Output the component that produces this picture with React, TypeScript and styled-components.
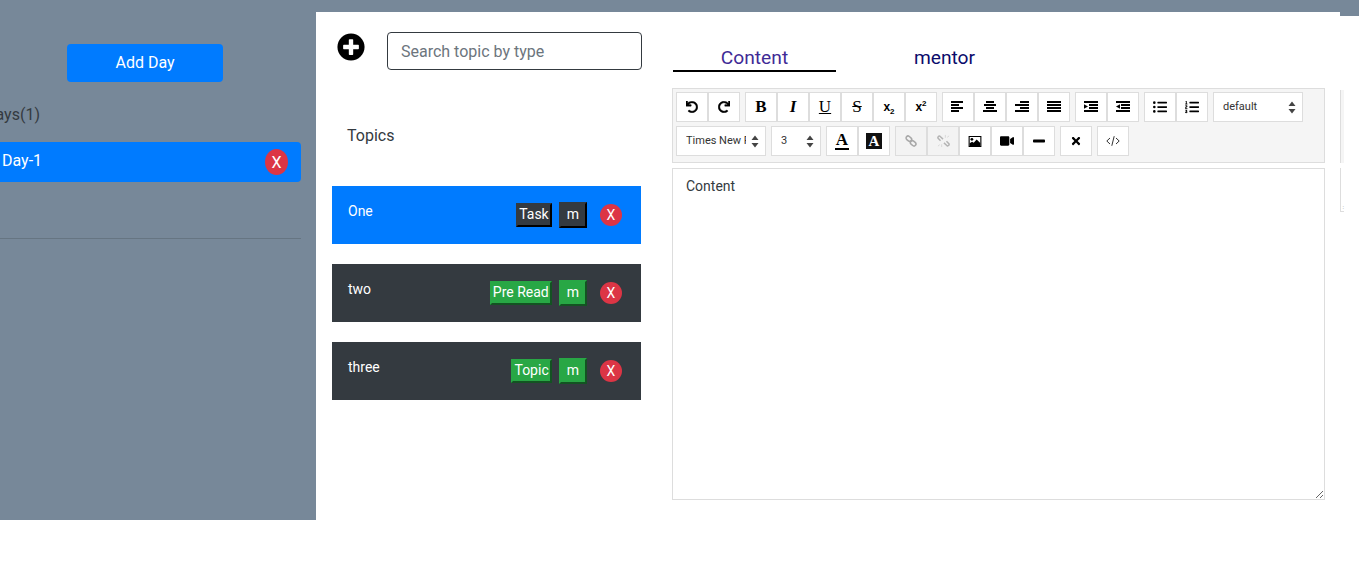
import React from 'react'
import styled, { createGlobalStyle } from 'styled-components'
import {
  FaListOl,
  FaListUl,
  FaPlusCircle,
  FaRedo,
  FaTimes,
  FaUndo,
  FaVideo,
} from 'react-icons/fa'

const arrows =
  "url(\"data:image/svg+xml,%3Csvg xmlns='http://www.w3.org/2000/svg' width='8' height='13'%3E%3Cpath d='M4 0.5 7.5 5H.5zM4 12.5 7.5 8H.5z' fill='%23444'/%3E%3C/svg%3E\")"

const GlobalStyle = createGlobalStyle`
  html, body {
    margin: 0;
    background: #fff;
    font-family: Roboto, "Liberation Sans", sans-serif;
    color: #212529;
  }
  * {
    box-sizing: border-box;
  }
`

const Shell = styled.div`
  display: flex;
  width: 1359px;
  height: 520px;
  background: #778899;
  overflow: hidden;
`

const Sidebar = styled.aside`
  flex: 0 0 316px;
  padding-top: 44px;
  overflow: hidden;
`

const AddDayButton = styled.button`
  display: block;
  width: 156px;
  height: 38px;
  margin-left: 67px;
  padding: 0 0 2px;
  border: 0;
  border-radius: 4px;
  background: #007bff;
  color: #fff;
  font: 16px Roboto, sans-serif;
`

const DaysLabel = styled.div`
  margin: 21px 0 0 -15px;
  font-size: 16px;
  line-height: 24px;
  color: #343a40;
`

const DayRow = styled.div`
  display: flex;
  align-items: center;
  justify-content: space-between;
  width: 301px;
  height: 40px;
  margin-top: 15px;
  padding: 0 13px 0 2px;
  border-radius: 0 4px 4px 0;
  background: #007bff;
  color: #fff;
  font-size: 16px;
`

const DayName = styled.span`
  margin-bottom: 3px;
`

const DayRemove = styled.span`
  display: flex;
  align-items: center;
  justify-content: center;
  width: 23px;
  height: 26px;
  border-radius: 50%;
  background: #dc3545;
  color: #fff;
  font-size: 16px;
`

const SideRule = styled.hr`
  width: 301px;
  margin: 56px 0 0;
  border: 0;
  border-top: 1px solid rgba(52, 58, 64, 0.25);
`

const Panel = styled.main`
  display: flex;
  flex: 0 0 1024px;
  margin-top: 12px;
  background: #fff;
`

const LeftColumn = styled.section`
  flex: 0 0 325px;
  margin-left: 16px;
  padding-top: 20px;
`

const SearchRow = styled.div`
  display: flex;
  align-items: flex-start;
  width: 310px;
  padding-left: 5px;
`

const AddTopic = styled.span`
  display: flex;
  flex: 0 0 28px;
  margin-top: 1px;
  color: #000;
`

const SearchInput = styled.input`
  flex: 0 0 255px;
  height: 38px;
  margin-left: 22px;
  padding: 0 13px;
  border: 1px solid #343a40;
  border-radius: 4px;
  font: 16px Roboto, sans-serif;
  &::placeholder {
    color: #6c757d;
    opacity: 1;
  }
`

const TopicsTitle = styled.h2`
  margin: 54px 0 38px;
  padding-left: 15px;
  color: #343a40;
  font-size: 16px;
  font-weight: 400;
  line-height: 24px;
`

const TopicList = styled.div`
  display: flex;
  flex-direction: column;
  gap: 20px;
  width: 309px;
`

const TopicCard = styled.div<{ $active?: boolean }>`
  display: flex;
  align-items: center;
  justify-content: space-between;
  height: 58px;
  padding: 0 19px 0 16px;
  background: ${(p) => (p.$active ? '#007bff' : '#343a40')};
  color: #fff;
`

const TopicName = styled.span`
  align-self: flex-start;
  padding-top: 16px;
  font-size: 14px;
  line-height: 18px;
`

const TopicActions = styled.div`
  display: flex;
  align-items: center;
`

const Tag = styled.button<{ $dark?: boolean; $wide?: boolean }>`
  height: ${(p) => (p.$wide ? '26px' : '24px')};
  margin-left: ${(p) => (p.$wide ? '7px' : '0')};
  padding: 0 ${(p) => (p.$wide ? '6px' : '1px')} 2px;
  border: 2px outset ${(p) => (p.$dark ? '#343a40' : '#28a745')};
  background: ${(p) => (p.$dark ? '#343a40' : '#28a745')};
  color: #fff;
  font: 14px/18px Roboto, sans-serif;
`

const TopicRemove = styled.span`
  display: flex;
  align-items: center;
  justify-content: center;
  width: 22px;
  height: 22px;
  margin-left: 13px;
  padding-bottom: 1px;
  border-radius: 50%;
  background: #dc3545;
  font-size: 14px;
`

const RightColumn = styled.section`
  flex: 0 0 653px;
  margin-left: 15px;
  padding-top: 32px;
`

const Tabs = styled.nav`
  display: flex;
  gap: 27px;
  margin: 0 0 16px 1px;
`

const Tab = styled.div<{ $active?: boolean }>`
  width: 163px;
  height: 28px;
  border-bottom: 2px solid ${(p) => (p.$active ? '#000' : 'transparent')};
  color: ${(p) => (p.$active ? '#3f2b96' : '#0b0b6b')};
  font-size: 19.2px;
  line-height: 27px;
  text-align: center;
`

const Toolbar = styled.div`
  display: flex;
  flex-direction: column;
  gap: 4px;
  height: 75px;
  padding: 3px 3px 6px;
  border: 1px solid #ddd;
  background: #f5f5f5;
`

const ToolRow = styled.div`
  display: flex;
  gap: 5px;
`

const ToolGroup = styled.div`
  display: flex;
`

const ToolButton = styled.button<{ $off?: boolean }>`
  display: flex;
  align-items: center;
  justify-content: center;
  width: 32px;
  height: 30px;
  padding: 0;
  border: 1px solid #ddd;
  background: ${(p) => (p.$off ? '#f3f3f3' : '#fff')};
  color: #000;
  font-size: 14px;
`

const ToolSelect = styled.select<{ $width: number }>`
  width: ${(p) => p.$width}px;
  height: 30px;
  padding: 0 19px 2px 9px;
  border: 1px solid #ddd;
  border-radius: 0;
  appearance: none;
  background: #fff ${arrows} no-repeat right 6px center;
  color: #333;
  font: 11px Roboto, sans-serif;
`

const SerifMark = styled.span<{ $italic?: boolean; $under?: boolean; $strike?: boolean }>`
  font: ${(p) => (p.$italic ? 'italic ' : '')}${(p) => (p.$strike || p.$under ? '400' : '700')} 17px "Liberation Serif", serif;
  text-decoration: ${(p) =>
    p.$under ? 'underline' : p.$strike ? 'line-through' : 'none'};
`

const ScriptMark = styled.span`
  font: 700 12px "Liberation Sans", sans-serif;
  sub,
  sup {
    font-size: 8px;
    line-height: 0;
  }
`

const ColorMark = styled.span`
  padding: 0 1px;
  border-bottom: 2px solid #000;
  font: 700 17px/16px "Liberation Serif", serif;
`

const BackColorMark = styled.span`
  width: 16px;
  height: 16px;
  background: #111;
  color: #fff;
  font: 700 15px/17px "Liberation Serif", serif;
  text-align: center;
`

const Editor = styled.textarea`
  display: block;
  width: 653px;
  height: 332px;
  margin-top: 5px;
  padding: 8px 13px;
  border: 1px solid #ddd;
  border-radius: 0;
  outline: none;
  color: #343a40;
  font: 14px/18px Roboto, sans-serif;
`

const Overflow = styled.div`
  flex: 0 0 19px;
  margin-top: 16px;
  padding-top: 74px;
  background: #fff;
`

const OverflowBar = styled.div`
  width: 4px;
  height: 73px;
  border-left: 1px solid #ddd;
  background: #f5f5f5;
`

const OverflowEditor = styled.div`
  display: flex;
  align-items: flex-end;
  justify-content: flex-end;
  width: 4px;
  height: 44px;
  margin-top: 5px;
  border-left: 1px solid #ddd;
  border-bottom: 1px solid #ddd;
  color: #777;
  font-size: 6px;
  line-height: 8px;
`

const Lines = ({ widths, align }: { widths: number[]; align: 'left' | 'center' | 'right' }) => (
  <svg width='14' height='12' viewBox='0 0 14 12'>
    {widths.map((w, i) => (
      <rect
        key={i}
        x={align === 'left' ? 0 : align === 'right' ? 14 - w : (14 - w) / 2}
        y={i * 3}
        width={w}
        height='2'
      />
    ))}
  </svg>
)

const Indent = ({ out }: { out?: boolean }) => (
  <svg width='14' height='12' viewBox='0 0 14 12'>
    <rect width='14' height='2' />
    <rect x='5' y='3' width='9' height='2' />
    <rect x='5' y='6' width='9' height='2' />
    <rect y='9' width='14' height='2' />
    <path d={out ? 'M4 3.2v4.6L0 5.5z' : 'M0 3.2v4.6l4-2.3z'} />
  </svg>
)

const LinkIcon = () => (
  <svg width='12' height='12' viewBox='0 0 14 14' fill='none' stroke='#a8a8a8' strokeWidth='1.8'>
    <rect x='1' y='2' width='7' height='4.6' rx='2.3' transform='rotate(40 4.5 4.3)' />
    <rect x='6' y='7.4' width='7' height='4.6' rx='2.3' transform='rotate(40 9.5 9.7)' />
  </svg>
)

const UnlinkIcon = () => (
  <svg width='13' height='14' viewBox='0 0 14 15' fill='none' stroke='#b4b4b4' strokeWidth='1.6'>
    <path d='M6.5 5.5 3.2 2.4a1.6 1.6 0 0 0-2 2.3l2.6 2.6' />
    <path d='M7.5 9.5l3.3 3.1a1.6 1.6 0 0 0 2-2.3l-2.6-2.6' />
    <path d='M9 1v3M11 3.5l2-1.5M5 14v-3M3 11.5 1 13' strokeWidth='.8' stroke='#d0d0d0' />
  </svg>
)

const ImageIcon = () => (
  <svg width='14' height='11' viewBox='0 0 14 12'>
    <path fillRule='evenodd' d='M0 0h14v12H0zM1.2 1.2v9.6h11.6V1.2z' />
    <circle cx='3.6' cy='3.6' r='1.5' />
    <path d='M1.2 10.8V8l2.6-1.8 1.8 1.2 3.2-3.6 4 3.8v3.2z' />
  </svg>
)

const CodeIcon = () => (
  <svg width='14' height='12' viewBox='0 0 14 12' fill='none' stroke='#333' strokeWidth='1'>
    <path d='M4 3 .8 6 4 9M10 3l3.2 3L10 9M8.2 1.2 5.8 10.8' />
  </svg>
)

const MinusIcon = () => (
  <svg width='12' height='4' viewBox='0 0 12 4'>
    <rect y='.5' width='12' height='3' rx='.8' />
  </svg>
)

const topics = [
  { name: 'One', type: 'Task', active: true },
  { name: 'two', type: 'Pre Read', active: false },
  { name: 'three', type: 'Topic', active: false },
]

const App: React.FC = () => (
  <>
    <GlobalStyle />
    <Shell>
      <Sidebar>
        <AddDayButton>Add Day</AddDayButton>
        <DaysLabel>Days(1)</DaysLabel>
        <DayRow>
          <DayName>Day-1</DayName>
          <DayRemove>X</DayRemove>
        </DayRow>
        <SideRule />
      </Sidebar>

      <Panel>
        <LeftColumn>
          <SearchRow>
            <AddTopic>
              <FaPlusCircle size={28} />
            </AddTopic>
            <SearchInput placeholder='Search topic by type' />
          </SearchRow>
          <TopicsTitle>Topics</TopicsTitle>
          <TopicList>
            {topics.map((topic) => (
              <TopicCard key={topic.name} $active={topic.active}>
                <TopicName>{topic.name}</TopicName>
                <TopicActions>
                  <Tag $dark={topic.active}>{topic.type}</Tag>
                  <Tag $dark={topic.active} $wide>
                    m
                  </Tag>
                  <TopicRemove>X</TopicRemove>
                </TopicActions>
              </TopicCard>
            ))}
          </TopicList>
        </LeftColumn>

        <RightColumn>
          <Tabs>
            <Tab $active>Content</Tab>
            <Tab>mentor</Tab>
          </Tabs>
          <Toolbar>
            <ToolRow>
              <ToolGroup>
                <ToolButton>
                  <FaUndo size={12} stroke='currentColor' strokeWidth={16} />
                </ToolButton>
                <ToolButton>
                  <FaRedo size={12} stroke='currentColor' strokeWidth={16} />
                </ToolButton>
              </ToolGroup>
              <ToolGroup>
                <ToolButton>
                  <SerifMark>B</SerifMark>
                </ToolButton>
                <ToolButton>
                  <SerifMark $italic>I</SerifMark>
                </ToolButton>
                <ToolButton>
                  <SerifMark $under>U</SerifMark>
                </ToolButton>
                <ToolButton>
                  <SerifMark $strike>S</SerifMark>
                </ToolButton>
                <ToolButton>
                  <ScriptMark>
                    x<sub>2</sub>
                  </ScriptMark>
                </ToolButton>
                <ToolButton>
                  <ScriptMark>
                    x<sup>2</sup>
                  </ScriptMark>
                </ToolButton>
              </ToolGroup>
              <ToolGroup>
                <ToolButton>
                  <Lines widths={[12, 8, 12, 8]} align='left' />
                </ToolButton>
                <ToolButton>
                  <Lines widths={[8, 12, 8, 14]} align='center' />
                </ToolButton>
                <ToolButton>
                  <Lines widths={[9, 14, 9, 14]} align='right' />
                </ToolButton>
                <ToolButton>
                  <Lines widths={[14, 14, 14, 14]} align='left' />
                </ToolButton>
              </ToolGroup>
              <ToolGroup>
                <ToolButton>
                  <Indent />
                </ToolButton>
                <ToolButton>
                  <Indent out />
                </ToolButton>
              </ToolGroup>
              <ToolGroup>
                <ToolButton>
                  <FaListUl size={14} />
                </ToolButton>
                <ToolButton>
                  <FaListOl size={14} />
                </ToolButton>
              </ToolGroup>
              <ToolSelect $width={90} defaultValue='default'>
                <option>default</option>
              </ToolSelect>
            </ToolRow>
            <ToolRow>
              <ToolSelect $width={90} defaultValue='Times New Roman'>
                <option>Times New Roman</option>
              </ToolSelect>
              <ToolSelect $width={50} defaultValue='3'>
                <option>3</option>
              </ToolSelect>
              <ToolGroup>
                <ToolButton>
                  <ColorMark>A</ColorMark>
                </ToolButton>
                <ToolButton>
                  <BackColorMark>A</BackColorMark>
                </ToolButton>
              </ToolGroup>
              <ToolGroup>
                <ToolButton $off>
                  <LinkIcon />
                </ToolButton>
                <ToolButton $off>
                  <UnlinkIcon />
                </ToolButton>
                <ToolButton>
                  <ImageIcon />
                </ToolButton>
                <ToolButton>
                  <FaVideo size={14} />
                </ToolButton>
                <ToolButton>
                  <MinusIcon />
                </ToolButton>
              </ToolGroup>
              <ToolButton>
                <FaTimes size={12} />
              </ToolButton>
              <ToolButton>
                <CodeIcon />
              </ToolButton>
            </ToolRow>
          </Toolbar>
          <Editor defaultValue='Content' />
        </RightColumn>
      </Panel>

      <Overflow>
        <OverflowBar />
        <OverflowEditor>:</OverflowEditor>
      </Overflow>
    </Shell>
  </>
)

export default App
